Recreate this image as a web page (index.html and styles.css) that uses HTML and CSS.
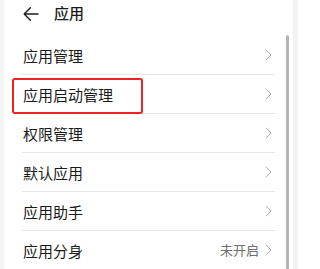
FILE: index.html
```html
<!DOCTYPE html>
<html lang="zh-CN">
<head>
<meta charset="utf-8">
<link rel="stylesheet" href="styles.css">
</head>
<body>
<div class="page">
  <div class="edge-left"></div>
  <div class="main">
    <div class="header">
      <svg class="back" width="16" height="16" viewBox="0 0 16 16"><path d="M15 8H1.2M7.4 1.8L1.2 8L7.4 14.2" fill="none" stroke="#1a1a1a" stroke-width="1.4" stroke-linecap="round" stroke-linejoin="round"/></svg>
      <span class="title">应用</span>
    </div>
    <div class="list">
      <div class="row"><span class="label">应用管理</span><span class="chev"><svg width="7" height="12" viewBox="0 0 7 12"><path d="M1 0.8L6 6L1 11.2" fill="none" stroke="#a8a8a8" stroke-width="1"/></svg></span></div>
      <div class="row"><span class="label">应用启动管理</span><span class="chev"><svg width="7" height="12" viewBox="0 0 7 12"><path d="M1 0.8L6 6L1 11.2" fill="none" stroke="#a8a8a8" stroke-width="1"/></svg></span><div class="highlight"></div></div>
      <div class="row"><span class="label">权限管理</span><span class="chev"><svg width="7" height="12" viewBox="0 0 7 12"><path d="M1 0.8L6 6L1 11.2" fill="none" stroke="#a8a8a8" stroke-width="1"/></svg></span></div>
      <div class="row"><span class="label">默认应用</span><span class="chev"><svg width="7" height="12" viewBox="0 0 7 12"><path d="M1 0.8L6 6L1 11.2" fill="none" stroke="#a8a8a8" stroke-width="1"/></svg></span></div>
      <div class="row"><span class="label">应用助手</span><span class="chev"><svg width="7" height="12" viewBox="0 0 7 12"><path d="M1 0.8L6 6L1 11.2" fill="none" stroke="#a8a8a8" stroke-width="1"/></svg></span></div>
      <div class="row last"><span class="label">应用分身</span><span class="value">未开启</span><span class="chev"><svg width="7" height="12" viewBox="0 0 7 12"><path d="M1 0.8L6 6L1 11.2" fill="none" stroke="#a8a8a8" stroke-width="1"/></svg></span></div>
    </div>
  </div>
  <div class="track"><div class="thumb"></div></div>
  <div class="edge-right"></div>
</div>
</body>
</html>
```
FILE: styles.css
```css
html, body {
  margin: 0;
  padding: 0;
  background: #ffffff;
}
body {
  font-family: "Noto Sans CJK SC", "Noto Sans", sans-serif;
  color: #1a1a1a;
  overflow: hidden;
}
.page {
  display: flex;
  width: 298px;
  height: 269px;
  overflow: hidden;
}
.edge-left {
  width: 4px;
  background: #f5f5f5;
  flex: none;
}
.main {
  flex: 1;
  display: flex;
  flex-direction: column;
}
.header {
  height: 27px;
  display: flex;
  align-items: center;
  padding-left: 19px;
  margin-bottom: 9px;
}
.back {
  display: block;
  flex: none;
}
.title {
  margin-left: 15px;
  font-size: 15px;
  font-weight: 500;
  line-height: 20px;
  margin-top: -1px;
}
.list {
  margin-left: 18px;
  margin-right: 7px;
}
.row {
  position: relative;
  height: 38px;
  border-bottom: 1px solid #e6e6e6;
  display: flex;
  align-items: center;
  padding-left: 1px;
  padding-right: 3px;
}
.row.last {
  border-bottom: none;
}
.label {
  flex: 1;
  font-size: 15px;
  line-height: 20px;
  padding-top: 1px;
}
.value {
  font-size: 13px;
  color: #6e6e6e;
  margin-right: 6px;
  line-height: 18px;
}
.chev {
  display: flex;
  align-items: center;
  margin-top: -1px;
}
.chev svg {
  display: block;
}
.highlight {
  position: absolute;
  left: -10px;
  top: 3px;
  width: 131px;
  height: 36px;
  box-sizing: border-box;
  border: 2px solid #f02222;
  border-radius: 3px;
}
.track {
  width: 11px;
  flex: none;
  padding-top: 35px;
  padding-left: 4px;
  box-sizing: border-box;
  display: flex;
}
.thumb {
  width: 3px;
  background: #b4b4b4;
  border-radius: 1.5px 1.5px 0 0;
}
.edge-right {
  width: 5px;
  flex: none;
  background: #f3f3f3;
}
```
